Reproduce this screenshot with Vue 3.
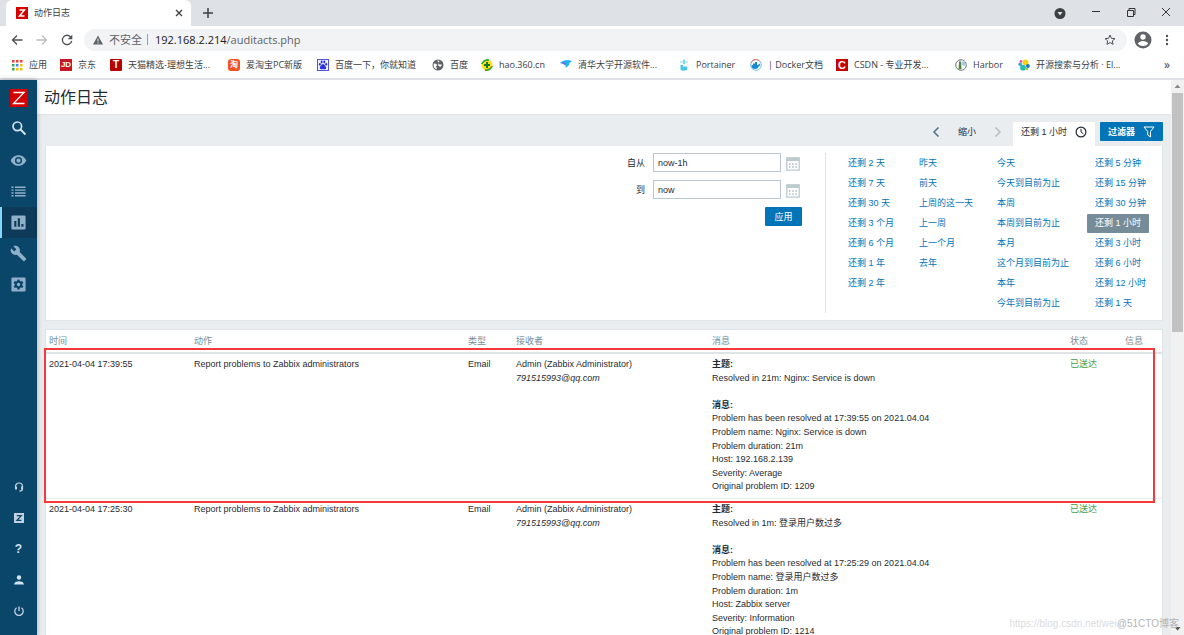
<script setup>
const bookmarks = [
  { icon: 'apps', text: '应用' },
  { icon: 'jd', text: '京东' },
  { icon: 'tmall', text: '天猫精选-理想生活...' },
  { icon: 'taobao', text: '爱淘宝PC新版' },
  { icon: 'paw', text: '百度一下，你就知道' },
  { icon: 'globe', text: '百度' },
  { icon: 'hao', text: 'hao.360.cn' },
  { icon: 'bird', text: '清华大学开源软件...' },
  { icon: 'crane', text: 'Portainer' },
  { icon: 'docker', text: '| Docker文档' },
  { icon: 'csdn', text: 'CSDN - 专业开发...' },
  { icon: 'harbor', text: 'Harbor' },
  { icon: 'elastic', text: '开源搜索与分析 · El...' },
]
const menu = [
  { name: '监测', d: 'M12 4.5C7 4.500 2.700 7.600 1 12c1.700 4.400 6 7.500 11 7.500s9.300-3.100 11-7.500c-1.700-4.400-6-7.500-11-7.500zM12 17a5 5 0 1 1 0-10 5 5 0 0 1 0 10zm0-8a3 3 0 1 0 0 6 3 3 0 0 0 0-6z' },
  { name: '资产记录', d: 'M2 5h3v2H2zM7 5h15v2H7zM2 9h3v2H2zM7 9h15v2H7zM2 13h3v2H2zM7 13h15v2H7zM2 17h3v2H2zM7 17h15v2H7z' },
  { name: '报表', active: true, d: 'M20 2H4a2 2 0 0 0-2 2v16c0 1.100.9 2 2 2h16a2 2 0 0 0 2-2V4a2 2 0 0 0-2-2zM9 18H6V10h3zm5 0h-3V6h3zm5 0h-3v-4h3z' },
  { name: '配置', d: 'M22.700 19l-9.100-9.100c.9-2.300.4-5-1.500-6.900-2-2-5-2.400-7.400-1.300L9 6 6 9 1.600 4.700C.4 7.100.9 10.100 2.900 12.100c1.900 1.900 4.600 2.400 6.900 1.500l9.100 9.100c.4.4 1 .4 1.400 0l2.300-2.300c.5-.4.5-1.100.1-1.400z' },
  { name: '管理', d: 'M4 2a2 2 0 0 0-2 2v16c0 1.100.9 2 2 2h16a2 2 0 0 0 2-2V4a2 2 0 0 0-2-2zM10.500 5h3l.4 2 1.500.9 2-.7 1.500 2.600-1.600 1.400v1.700l1.600 1.400-1.500 2.600-2-.7-1.500.9-.4 2h-3l-.4-2-1.500-.9-2 .7-1.500-2.600 1.600-1.400v-1.700L5.100 9.800l1.500-2.600 2 .7 1.500-.9zM12 9.700a2.400 2.400 0 1 0 0 4.800 2.400 2.400 0 0 0 0-4.800z' },
]
const ranges = [
  ['还剩 2 天', '还剩 7 天', '还剩 30 天', '还剩 3 个月', '还剩 6 个月', '还剩 1 年', '还剩 2 年'],
  ['昨天', '前天', '上周的这一天', '上一周', '上一个月', '去年'],
  ['今天', '今天到目前为止', '本周', '本周到目前为止', '本月', '这个月到目前为止', '本年', '今年到目前为止'],
  ['还剩 5 分钟', '还剩 15 分钟', '还剩 30 分钟', '还剩 1 小时', '还剩 3 小时', '还剩 6 小时', '还剩 12 小时', '还剩 1 天'],
]
const columns = ['时间', '动作', '类型', '接收者', '消息', '状态', '信息']
const rows = [
  {
    time: '2021-04-04 17:39:55',
    subject: 'Resolved in 21m: Nginx: Service is down',
    lines: [
      'Problem has been resolved at 17:39:55 on 2021.04.04',
      'Problem name: Nginx: Service is down',
      'Problem duration: 21m',
      'Host: 192.168.2.139',
      'Severity: Average',
      'Original problem ID: 1209',
    ],
  },
  {
    time: '2021-04-04 17:25:30',
    subject: 'Resolved in 1m: 登录用户数过多',
    lines: [
      'Problem has been resolved at 17:25:29 on 2021.04.04',
      'Problem name: 登录用户数过多',
      'Problem duration: 1m',
      'Host: Zabbix server',
      'Severity: Information',
      'Original problem ID: 1214',
    ],
  },
]
</script>

<template>
  <div class="browser">
    <header class="tabs">
      <div class="tab">
        <svg class="fav" viewBox="0 0 12 12"><rect width="12" height="12" fill="#d40000" /><path d="M3.500 3h5L3.500 9h5" fill="none" stroke="#fff" stroke-width="1.500" /></svg>
        <span class="tab-title">动作日志</span>
        <button class="plain" aria-label="关闭标签页"><svg width="8" height="8" viewBox="0 0 8 8"><path d="M1 1l6 6M7 1L1 7" stroke="#3c4043" stroke-width="1.300" /></svg></button>
      </div>
      <button class="plain new-tab" aria-label="新标签页"><svg width="10" height="10" viewBox="0 0 10 10"><path d="M5 0v10M0 5h10" stroke="#3c4043" stroke-width="1.500" /></svg></button>
      <div class="window-buttons">
        <button class="plain" aria-label="搜索标签页"><svg width="12" height="12" viewBox="0 0 12 12"><circle cx="6" cy="6.500" r="5.500" fill="#3c4043" /><path d="M3.500 5h5L6 8.500z" fill="#dee1e6" /></svg></button>
        <button class="plain" aria-label="最小化"><svg width="10" height="12" viewBox="0 0 10 12"><path d="M1 4.500h8" stroke="#333" /></svg></button>
        <button class="plain" aria-label="还原"><svg width="10" height="12" viewBox="0 0 10 12"><path d="M1.500 3.500h6v6h-6zM3 3V1.500h6v6H7.500" fill="none" stroke="#333" /></svg></button>
        <button class="plain" aria-label="关闭"><svg width="10" height="12" viewBox="0 0 10 12"><path d="M1 1l8 8M9 1l-8 8" stroke="#333" /></svg></button>
      </div>
    </header>

    <div class="toolbar">
      <button class="plain" aria-label="后退"><svg width="12" height="12" viewBox="0 0 12 12"><path d="M11.500 6H1.500M6 1.500L1.500 6 6 10.500" fill="none" stroke="#4d5156" stroke-width="1.300" /></svg></button>
      <button class="plain" aria-label="前进"><svg width="12" height="12" viewBox="0 0 12 12"><path d="M.5 6h10M6 1.500L10.500 6 6 10.500" fill="none" stroke="#babcbe" stroke-width="1.300" /></svg></button>
      <button class="plain" aria-label="重新加载"><svg width="12" height="12" viewBox="0 0 12 12"><path d="M10 3.300A4.700 4.700 0 1 0 10.700 7" fill="none" stroke="#4d5156" stroke-width="1.300" /><path d="M11.300 0.700v4.600H6.700z" fill="#4d5156" /></svg></button>
      <div class="omnibox">
        <svg width="10" height="10" viewBox="0 0 10 10"><path d="M5 .5L10 9.500H0z" fill="#5f6368" /><path d="M5 3.500v3M5 7.300v1.200" stroke="#f1f3f4" /></svg>
        <span class="unsafe">不安全</span>
        <span class="bar"></span>
        <span class="url"><b>192.168.2.214</b>/auditacts.php</span>
        <button class="plain star" aria-label="收藏"><svg width="12" height="12" viewBox="0 0 12 12"><path d="M6 1l1.400 3.300 3.600.3-2.700 2.300.8 3.500L6 8.500l-3.100 1.900.8-3.500L1 4.600l3.600-.3z" fill="none" stroke="#4d5156" /></svg></button>
      </div>
      <button class="plain" aria-label="用户"><svg width="18" height="18" viewBox="0 0 18 18"><circle cx="9" cy="9" r="8.500" fill="#5f6368" /><circle cx="9" cy="6" r="2.700" fill="#fff" /><path d="M3.700 12.500c1-1.800 3.300-2.600 5.300-2.600s4.300.8 5.300 2.600A6.500 6.500 0 0 1 9 15a6.500 6.500 0 0 1-5.300-2.500z" fill="#fff" /></svg></button>
      <button class="plain more" aria-label="菜单"><svg width="4" height="12" viewBox="0 0 4 12"><g fill="#4d5156"><circle cx="2" cy="2" r="1.200" /><circle cx="2" cy="6" r="1.200" /><circle cx="2" cy="10" r="1.200" /></g></svg></button>
    </div>

    <nav class="bookmarks">
      <a v-for="b in bookmarks" :key="b.text" href="#">
        <span v-if="b.icon === 'jd'" class="badge jd">JD</span>
        <span v-else-if="b.icon === 'tmall'" class="badge tmall">T</span>
        <span v-else-if="b.icon === 'taobao'" class="badge taobao">淘</span>
        <span v-else-if="b.icon === 'csdn'" class="badge csdn">C</span>
        <svg v-else class="bi" viewBox="0 0 12 12">
          <g v-if="b.icon === 'apps'">
            <g fill="#ea4335"><path d="M1 1h2.500v2.500H1zM5 1h2.500v2.500H5zM9 1h2.500v2.500H9z" /></g>
            <path d="M1 5h2.500v2.500H1z" fill="#34a853" /><path d="M5 5h2.500v2.500H5z" fill="#4285f4" /><path d="M9 5h2.500v2.500H9z" fill="#fbbc05" />
            <path d="M1 9h2.500v2.500H1z" fill="#34a853" /><path d="M5 9h2.500v2.500H5zM9 9h2.500v2.500H9z" fill="#fbbc05" />
          </g>
          <g v-else-if="b.icon === 'paw'">
            <rect x=".5" y=".5" width="11" height="11" fill="#eef0ff" stroke="#4b55e8" />
            <g fill="#2932e1"><ellipse cx="2.900" cy="5.200" rx="1" ry="1.300" /><ellipse cx="4.700" cy="3" rx="1" ry="1.400" /><ellipse cx="7.300" cy="3" rx="1" ry="1.400" /><ellipse cx="9.100" cy="5.200" rx="1" ry="1.300" /><path d="M6 5c1.400 0 3.400 3 3.100 4.300-.3 1.400-2 .9-3.100.9s-2.800.5-3.100-.9C2.600 8 4.600 5 6 5z" /></g>
          </g>
          <g v-else-if="b.icon === 'globe'">
            <circle cx="6" cy="6" r="5.500" fill="#5f6368" />
            <path d="M1.800 4.500l2.200.3 1.300 1.400L4 7.600l1 2.700C2.500 10 1 7.500 1.800 4.500zM5.500 1.300l2.300 1-2 1.200L6.800 5.200l3.300.5-1.600 2-2-.7M7.500 9.300l2-.8" fill="#fff" />
          </g>
          <g v-else-if="b.icon === 'hao'">
            <circle cx="6" cy="6" r="5.500" fill="#ffdf1b" />
            <path d="M.7 5A5.500 5.500 0 0 1 8 1C5 1 2.500 2.500.7 5zM11.400 7A5.500 5.500 0 0 1 4 11c3 0 5.500-1.500 7.400-4z" fill="#2ca02c" stroke="#2ca02c" />
            <path d="M6 3v6M3 6h6" stroke="#157a1f" stroke-width="2" />
          </g>
          <g v-else-if="b.icon === 'bird'">
            <path d="M0 4C3 1 8 0 12 2L9.500 4c0 2-1.500 3.500-4 5 .5-1.500.3-2.300-.5-3C4 5 2 4 0 4z" fill="#21b4f3" />
            <path d="M0 4c3-1.200 5-.8 6 .5L4.500 6C3.500 4.800 2 4.200 0 4z" fill="#7868de" />
          </g>
          <g v-else-if="b.icon === 'crane'">
            <path d="M2 2.500h8v1H7V5H5V3.500H2zM5 .5h2v2H5z" fill="#7ed9f2" />
            <path d="M2.500 6h2.500v1.500h4V11c-2 1-4.500 1-6.500 0z" fill="#46c5ed" />
          </g>
          <g v-else-if="b.icon === 'docker'">
            <circle cx="6" cy="6" r="5.300" fill="#fff" stroke="#7abfe9" />
            <path d="M1 3.500A5.300 5.300 0 0 1 10 2.500" fill="none" stroke="#e87060" />
            <path d="M1.500 6h6.700l1-1.500L10.500 6 9 7c-.7 2-2 3-4 3-2.200 0-3.500-1.500-3.500-4zM3 4.500h4V6H3zM5 3h2v1.500H5z" fill="#1488d4" />
          </g>
          <g v-else-if="b.icon === 'harbor'">
            <circle cx="6" cy="6" r="5.300" fill="#fff" stroke="#707b75" />
            <path d="M4 3h2l.7 7H3.500z" fill="#60a844" /><path d="M6.500 3l3.500-1v5L7 6z" fill="#a6c8dc" /><path d="M5 1.500v9" stroke="#44624f" />
          </g>
          <g v-else>
            <circle cx="7.500" cy="3.300" r="2.900" fill="#fed10a" /><circle cx="5" cy="8.700" r="2.900" fill="#24bbb1" /><circle cx="2.200" cy="5.200" r="1.800" fill="#36a0df" /><circle cx="9.900" cy="7" r="1.900" fill="#1674b5" /><circle cx="3" cy="2.400" r="1.300" fill="#ef5098" /><circle cx="9" cy="10" r="1.200" fill="#93c83e" />
          </g>
        </svg>
        <span>{{ b.text }}</span>
      </a>
      <button class="plain overflow" aria-label="更多书签">»</button>
    </nav>

    <div class="app">
      <aside class="sidebar">
        <a class="logo" href="#" aria-label="Zabbix"><svg width="18" height="18" viewBox="0 0 18 18"><rect width="18" height="18" fill="#d40000" /><path d="M3.500 3.500h10.500L3.500 14.500h11" fill="none" stroke="#fff" stroke-width="1.300" /></svg></a>
        <button class="plain item search" aria-label="搜索"><svg width="16" height="16" viewBox="0 0 16 16"><circle cx="6.300" cy="6.300" r="4.300" fill="none" stroke="#d3e2ee" stroke-width="1.700" /><path d="M9.500 9.500l5 5" stroke="#d3e2ee" stroke-width="2" /></svg></button>
        <a v-for="m in menu" :key="m.name" href="#" class="item" :class="{ active: m.active }" :aria-label="m.name">
          <svg width="17" height="17" viewBox="0 0 24 24"><path :d="m.d" fill="#8fb0c8" fill-rule="evenodd" /></svg>
        </a>
        <div class="bottom">
          <a class="item" href="#" aria-label="支持"><svg width="10" height="10" viewBox="0 0 10 10"><path d="M1.500 6V4.500a3.500 3.500 0 0 1 7 0V7c0 1.500-1 2-3 2.200" fill="none" stroke="#c0d2df" stroke-width="1.200" /><path d="M1 4.500h2v3H1zM7 4.500h2v3H7z" fill="#c0d2df" /></svg></a>
          <a class="item" href="#" aria-label="分享"><svg width="10" height="10" viewBox="0 0 10 10"><rect width="10" height="10" fill="#c0d2df" /><path d="M2.800 2.700h4.400L3 7.300h4.400" fill="none" stroke="#0a466a" stroke-width="1.300" /></svg></a>
          <a class="item help" href="#">?</a>
          <a class="item" href="#" aria-label="用户设置"><svg width="10" height="10" viewBox="0 0 10 10"><circle cx="5" cy="2.500" r="2.200" fill="#d3e2ee" /><path d="M0 9.500c0-4.500 10-4.500 10 0z" fill="#d3e2ee" /></svg></a>
          <a class="item" href="#" aria-label="退出"><svg width="10" height="10" viewBox="0 0 10 10"><path d="M2.600 1.800A4.200 4.200 0 1 0 7.400 1.800M5 .5V5" fill="none" stroke="#c0d2df" stroke-width="1.300" /></svg></a>
        </div>
      </aside>

      <main>
        <h1>动作日志</h1>
        <div class="content">
          <div class="controls">
            <button class="plain step" aria-label="上一段"><svg width="8" height="10" viewBox="0 0 8 10"><path d="M6.500 .5L2 5l4.500 4.500" fill="none" stroke="#55778a" stroke-width="1.600" /></svg></button>
            <button class="plain zoom">缩小</button>
            <button class="plain step" aria-label="下一段"><svg width="8" height="10" viewBox="0 0 8 10"><path d="M1.500 .5L6 5 1.500 9.500" fill="none" stroke="#b4bfc5" stroke-width="1.500" /></svg></button>
            <button class="plain range-tab">还剩 1 小时<svg width="12" height="12" viewBox="0 0 12 12"><circle cx="6" cy="6" r="4.900" fill="none" stroke="#1f2c33" stroke-width="1.200" /><path d="M6 2.800V6l2.400 1.800" fill="none" stroke="#1f2c33" /></svg></button>
            <button class="plain filter-tab">过滤器<svg width="12" height="12" viewBox="0 0 12 12"><path d="M1 1h10L7.500 5.500V11L4.700 9V5.500z" fill="none" stroke="#fff" /></svg></button>
          </div>

          <section class="panel">
            <form class="period" @submit.prevent>
              <label for="from">自从</label>
              <input id="from" type="text" value="now-1h">
              <button type="button" class="plain" aria-label="选择开始日期"><svg width="14" height="14" viewBox="0 0 14 14"><path d="M.8 1h12.400v12.200H.8z" fill="#fff" stroke="#bccad1" stroke-width="1.300" /><path d="M.5 .5h13v3.500H.5z" fill="#bccad1" /><path d="M3 7h8M3 10h8" stroke="#a9b9c1" stroke-width="1.300" stroke-dasharray="1.500 1.700" /></svg></button>
              <label for="to">到</label>
              <input id="to" type="text" value="now">
              <button type="button" class="plain" aria-label="选择结束日期"><svg width="14" height="14" viewBox="0 0 14 14"><path d="M.8 1h12.400v12.200H.8z" fill="#fff" stroke="#bccad1" stroke-width="1.300" /><path d="M.5 .5h13v3.500H.5z" fill="#bccad1" /><path d="M3 7h8M3 10h8" stroke="#a9b9c1" stroke-width="1.300" stroke-dasharray="1.500 1.700" /></svg></button>
              <button type="submit" class="plain apply">应用</button>
            </form>
            <div class="ranges">
              <ul v-for="(col, i) in ranges" :key="i">
                <li v-for="r in col" :key="r"><a href="#" :class="{ selected: r === '还剩 1 小时' }">{{ r }}</a></li>
              </ul>
            </div>
          </section>

          <div class="log">
            <table>
              <colgroup><col class="c-time"><col class="c-action"><col class="c-type"><col class="c-to"><col class="c-message"><col class="c-status"><col class="c-info"></colgroup>
              <thead><tr><th v-for="c in columns" :key="c" scope="col">{{ c }}</th></tr></thead>
              <tbody>
                <tr v-for="r in rows" :key="r.time">
                  <td>{{ r.time }}</td>
                  <td>Report problems to Zabbix administrators</td>
                  <td>Email</td>
                  <td>Admin (Zabbix Administrator)<br><em>791515993@qq.com</em></td>
                  <td>
                    <div class="message">
                      <strong>主题:</strong>
                      <span>{{ r.subject }}</span>
                      <span></span>
                      <strong>消息:</strong>
                      <span v-for="l in r.lines" :key="l">{{ l }}</span>
                    </div>
                  </td>
                  <td class="sent">已送达</td>
                  <td></td>
                </tr>
              </tbody>
            </table>
            <div class="highlight"></div>
          </div>
        </div>
      </main>

      <div class="scrollbar">
        <svg width="13" height="13" viewBox="0 0 13 13"><path d="M3.500 8h6l-3-3.500z" fill="#8a8a8a" /></svg>
        <div class="thumb"></div>
        <svg class="down" width="13" height="13" viewBox="0 0 13 13"><path d="M3.500 5h6l-3 3.500z" fill="#505050" /></svg>
      </div>
    </div>
    <div class="watermark"><span>https://blog.csdn.net/wei</span><span class="owner">@51CTO博客</span></div>
  </div>
</template>

<style>
body {
  margin: 0;
  overflow: hidden;
}
</style>

<style scoped>
.browser {
  position: relative;
  display: flex;
  flex-direction: column;
  height: 100vh;
  overflow: hidden;
  background: #fff;
  color: #1f2c33;
  font: 9px/14px "Liberation Sans", Arial, "Noto Sans CJK SC", sans-serif;
}
.browser *,
.browser *::before {
  box-sizing: border-box;
}
svg {
  display: block;
  flex: none;
}
a {
  color: inherit;
  text-decoration: none;
}
.plain {
  display: flex;
  align-items: center;
  justify-content: center;
  padding: 0;
  border: 0;
  background: none;
  color: inherit;
  font: inherit;
  white-space: nowrap;
}

.tabs {
  display: flex;
  flex: none;
  align-items: stretch;
  height: 26px;
  padding-left: 6px;
  background: #dee1e6;
}
.tab {
  display: flex;
  align-items: center;
  width: 185px;
  padding: 0 8px 0 10px;
  border-radius: 6px 6px 0 0;
  background: #fff;
  color: #3c4043;
}
.fav {
  width: 12px;
  height: 12px;
}
.tab-title {
  flex: 1;
  margin-left: 6px;
}
.new-tab {
  margin-left: 12px;
}
.window-buttons {
  display: flex;
  gap: 25px;
  margin-left: auto;
  padding-right: 13px;
}

.toolbar {
  display: flex;
  flex: none;
  align-items: center;
  gap: 13px;
  height: 27px;
  padding: 0 15px 0 11px;
}
.omnibox {
  display: flex;
  flex: 1;
  align-items: center;
  height: 22px;
  margin-right: -6px;
  margin-left: -2px;
  padding: 0 11px 0 9px;
  border-radius: 11px;
  background: #f1f3f4;
  color: #5f6368;
  font: 11px/16px "Open Sans", "Noto Sans CJK SC", sans-serif;
}
.unsafe {
  margin-left: 6px;
}
.bar {
  width: 1px;
  height: 11px;
  margin: 0 7px 0 5px;
  background: #9a9da1;
}
.url b {
  color: #202124;
  font-weight: 400;
}
.star {
  margin-left: auto;
}

.bookmarks {
  display: grid;
  flex: none;
  grid-template-columns: 49px 50px 118px 89px 115px 49px 79px 118px 72px 86px 119px 63px 1fr auto;
  align-items: center;
  height: 27px;
  padding: 0 14px 2px 11px;
  border-bottom: 2px solid #dee1e6;
  color: #3c4043;
  font: 9px/14px "Open Sans", "Noto Sans CJK SC", sans-serif;
}
.bookmarks a {
  display: flex;
  align-items: center;
  gap: 6px;
  white-space: nowrap;
}
.overflow {
  font-size: 12px;
}
.bi,
.badge {
  width: 12px;
  height: 12px;
}
.badge {
  flex: none;
  overflow: hidden;
  color: #fff;
  font: 700 8px/12px "Liberation Sans", "Noto Sans CJK SC", sans-serif;
  text-align: center;
}
.jd {
  background: #c81623;
}
.tmall {
  border-radius: 1px;
  background: #b80000;
  font-size: 10px;
}
.taobao {
  border-radius: 3px;
  background: #f4511e;
}
.csdn {
  background: #c70000;
  font-size: 11px;
}

.app {
  display: flex;
  flex: 1;
  min-height: 0;
}
.sidebar {
  z-index: 1;
  display: flex;
  flex: none;
  flex-direction: column;
  width: 37px;
  background: #0a466a;
  box-shadow: 0 0 5px rgba(0, 0, 0, 0.3);
}
.logo {
  display: flex;
  flex: none;
  justify-content: center;
  padding: 9px 0 5px;
}
.item {
  display: flex;
  flex: none;
  align-items: center;
  justify-content: center;
  height: 31px;
  border-right: 2px solid transparent;
  border-left: 2px solid transparent;
}
.search {
  height: 33px;
  padding-bottom: 2px;
}
.active {
  border-right-color: #0c3a58;
  border-left-color: #80d8ff;
  background: #0c3a58;
}
.bottom {
  margin-top: auto;
  padding-bottom: 9px;
}
.help {
  color: #d3e2ee;
  font-weight: 700;
  font-size: 12px;
}

main {
  display: flex;
  flex: 1;
  flex-direction: column;
  min-width: 0;
  background: #e9edf0;
}
h1 {
  flex: none;
  margin: 0;
  padding: 6px 7px 4px;
  border-bottom: 1px solid #dfe4e7;
  background: #fff;
  font-weight: 400;
  font-size: 16px;
  line-height: 24px;
}
.content {
  padding: 7px 8px 0;
}
.controls {
  display: flex;
  align-items: flex-start;
  justify-content: flex-end;
}
.controls button {
  height: 19px;
}
.zoom {
  margin: 0 18px;
}
.controls .range-tab {
  gap: 8px;
  height: 24px;
  margin: 0 5px 0 11px;
  padding: 0 8px 5px;
  background: #fff;
}
.filter-tab,
.apply {
  border-radius: 1px;
  background: #0275b8;
  color: #fff;
}
.filter-tab {
  gap: 8px;
  padding: 0 8px;
  font-weight: 700;
}
.panel {
  display: flex;
  padding: 7px 8px 7px 0;
  border: 1px solid #dfe4e7;
  border-top: 0;
  background: #fff;
}
.period {
  display: grid;
  flex: 1;
  grid-template-columns: 1fr 128px 16px;
  grid-auto-rows: 19px;
  gap: 8px 5px;
  align-items: center;
  padding: 0 23px 0 0;
}
.period label {
  padding-right: 3px;
  text-align: right;
}
.period input {
  width: 100%;
  height: 19px;
  padding: 0 4px;
  border: 1px solid #b8c8ce;
  border-radius: 0;
  outline: 0;
  background: #fff;
  color: inherit;
  font: inherit;
}
.period button {
  justify-self: start;
  padding-top: 2px;
}
.period .apply {
  grid-column: 2 / 4;
  justify-self: end;
  width: 37px;
  height: 19px;
  padding: 0;
}
.ranges {
  display: grid;
  grid-template-columns: 71px 78px 98px auto;
  padding-left: 14px;
  border-left: 1px solid #dfe4e7;
}
ul {
  margin: 0;
  padding: 0;
  list-style: none;
}
li {
  display: flex;
  align-items: flex-end;
  height: 20px;
}
li a {
  height: 19px;
  padding: 0 8px;
  border-radius: 1px;
  color: #0275b8;
  line-height: 19px;
  white-space: nowrap;
}
li .selected {
  background: #768d99;
  color: #fff;
}

.log {
  position: relative;
  margin-top: 8px;
  border: 1px solid #dfe4e7;
  background: #fff;
}
table {
  width: 100%;
  border-collapse: separate;
  border-spacing: 0;
  table-layout: fixed;
}
.c-time {
  width: 145px;
}
.c-action {
  width: 274px;
}
.c-type {
  width: 48px;
}
.c-to {
  width: 196px;
}
.c-message {
  width: 358px;
}
.c-status {
  width: 55px;
}
.c-info {
  width: 40px;
}
th {
  padding: 4px 3px;
  border-bottom: 2px solid #dfe4e7;
  color: #768d99;
  font-weight: 400;
  text-align: left;
}
td {
  padding: 3px 3px 5px;
  border-bottom: 1px solid #ebeef0;
  vertical-align: top;
}
.message {
  display: grid;
  grid-template-rows: repeat(10, 1fr);
  height: 136px;
  white-space: nowrap;
}
.message > * {
  min-height: 0;
}
.sent {
  color: #429e47;
}
.highlight {
  position: absolute;
  top: 18px;
  right: 7px;
  left: -2px;
  height: 155px;
  border: 2px solid #f5383a;
}

.scrollbar {
  display: flex;
  flex: none;
  flex-direction: column;
  width: 13px;
  background: #f1f1f1;
}
.thumb {
  height: 43%;
  margin: 0 1px;
  background: #c1c1c1;
}
.down {
  margin-top: auto;
}
.watermark {
  position: absolute;
  right: 5px;
  bottom: 4px;
  z-index: 2;
  display: flex;
  color: #dcdcdc;
  font-size: 10px;
  line-height: 14px;
}
.owner {
  color: #b4b4b4;
}
</style>
